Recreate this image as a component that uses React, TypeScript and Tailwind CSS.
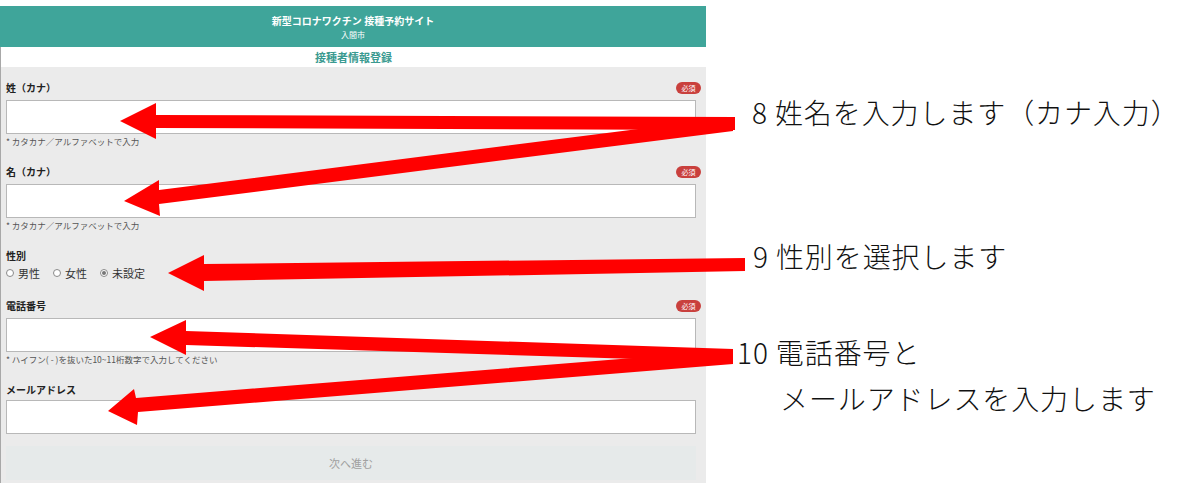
import React from "react";

function Badge() {
  return (
    <div className="w-[25px] h-[12px] rounded-full bg-[#c9403d] text-white text-[7px] leading-[12px] flex items-center justify-center">
      必須
    </div>
  );
}

function Field({ label, required, hint, inputMt = "mt-[5px]" }: { label: string; required?: boolean; hint?: string; inputMt?: string }) {
  return (
    <div className="flex flex-col">
      <div className="flex justify-between items-center h-[14px]">
        <span className="text-[10px] font-bold text-[#222] leading-[14px]">{label}</span>
        {required && <Badge />}
      </div>
      <div className={`${inputMt} mr-[5px] h-[34px] bg-white border border-[#b8b8b8]`} />
      {hint && <div className="mt-[2px] h-[10px] text-[8.5px] leading-[10px] text-[#555] whitespace-nowrap">{hint}</div>}
    </div>
  );
}

function Radio({ label, checked }: { label: string; checked?: boolean }) {
  return (
    <div className="flex items-center gap-[4px]">
      <div className="w-[8px] h-[8px] rounded-full border border-[#8a8a8a] bg-white flex items-center justify-center">
        {checked && <div className="w-[4px] h-[4px] rounded-full bg-[#777]" />}
      </div>
      <span className="text-[11px] leading-[14px] text-[#333]">{label}</span>
    </div>
  );
}

export default function App() {
  return (
    <div className="relative w-[1194px] h-[500px] bg-white flex overflow-hidden font-['Noto_Sans_CJK_JP','Noto_Sans',sans-serif]">
      <div className="w-[706px] flex flex-col pt-[6px]">
        <div className="h-[41px] bg-[#3fa59a] flex flex-col items-center justify-center text-white">
          <div className="text-[10px] font-bold leading-[14px]">新型コロナワクチン 接種予約サイト</div>
          <div className="text-[8px] leading-[11px] mt-[1px]">入間市</div>
        </div>
        <div className="border-l border-[#a8a8a8] flex flex-col">
          <div className="h-[20px] bg-white flex items-center justify-center text-[11px] font-bold text-[#3a9a90]">
            接種者情報登録
          </div>
          <div className="bg-[#ebebeb] pt-[14px] pl-[5px] pr-[5px] pb-[3px] flex flex-col">
            <div className="mb-[19px]">
              <Field label="姓（カナ）" required hint="* カタカナ／アルファベットで入力" />
            </div>
            <div className="mb-[19px]">
              <Field label="名（カナ）" required hint="* カタカナ／アルファベットで入力" />
            </div>
            <div className="mb-[19px] flex flex-col">
              <div className="h-[14px] flex items-center">
                <span className="text-[10px] font-bold text-[#222] leading-[14px]">性別</span>
              </div>
              <div className="mt-[3px] h-[14px] flex items-center gap-[13px]">
                <Radio label="男性" />
                <Radio label="女性" />
                <Radio label="未設定" checked />
              </div>
            </div>
            <div className="mb-[19px]">
              <Field label="電話番号" required hint="* ハイフン( - )を抜いた10~11桁数字で入力してください" />
            </div>
            <Field label="メールアドレス" inputMt="mt-[3px]" />
            <div className="mt-[12px] mr-[5px] h-[34px] bg-[#e6eaea] flex items-center justify-center text-[11px] text-[#a0a0a0]">
              次へ進む
            </div>
          </div>
        </div>
      </div>

      <div className="flex-1 flex flex-col text-[28px] leading-[34px] font-light text-[#111] tracking-[0.9px]">
        <div className="mt-[95px] pl-[46px] h-[34px] whitespace-nowrap">8 姓名を入力します（カナ入力）</div>
        <div className="mt-[110px] pl-[47px] h-[34px] whitespace-nowrap">9 性別を選択します</div>
        <div className="mt-[56px] pl-[31px] flex flex-col leading-[46px] whitespace-nowrap">
          <div>10 電話番号と</div>
          <div className="pl-[43px]">メールアドレスを入力します</div>
        </div>
      </div>

      <svg className="absolute inset-0 pointer-events-none" width="1194" height="500" viewBox="0 0 1194 500">
        <g fill="#ff0000">
          <polygon points="120,121 156,103 156,115 735,117 735,130 156,128 156,139" />
          <polygon points="124,201 159,180 159,190 733,117 733,131 159,204 160,216" />
          <polygon points="168,273 204,255 204,264 745,258 745,271 204,281 204,291" />
          <polygon points="150,337 186,320 186,331 733,349 733,362 186,345 186,355" />
          <polygon points="108,411 134,389 136,398 733,350 733,364 138,412 137,425" />
        </g>
      </svg>
    </div>
  );
}
